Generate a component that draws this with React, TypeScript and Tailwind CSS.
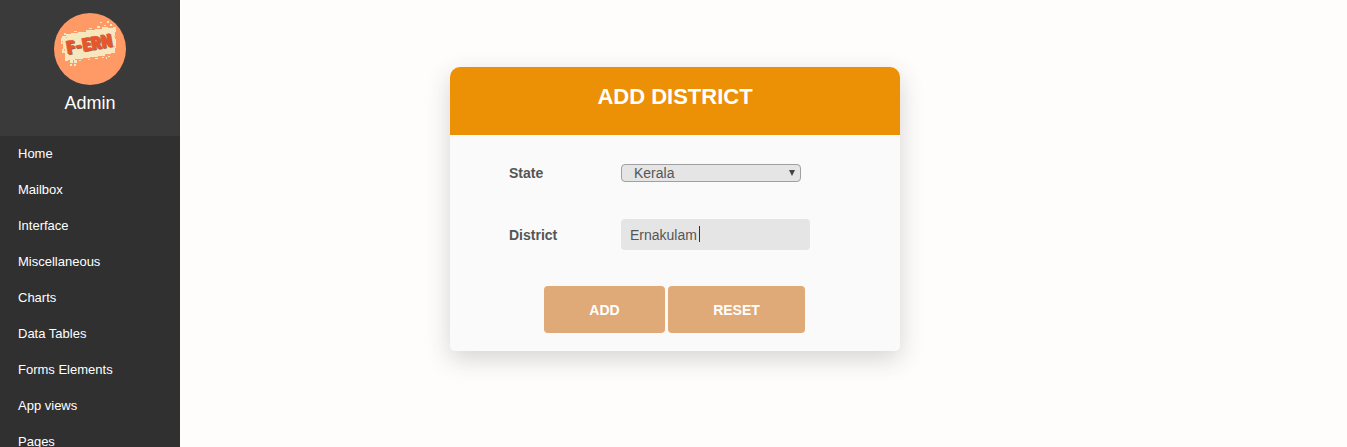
import { useState } from 'react';

const menu = [
  'Home',
  'Mailbox',
  'Interface',
  'Miscellaneous',
  'Charts',
  'Data Tables',
  'Forms Elements',
  'App views',
  'Pages',
];

function Logo() {
  return (
    <svg viewBox="0 0 72 72" className="size-[72px]" role="img" aria-label="F-ERN">
      <circle cx="36" cy="36" r="36" fill="#ff9966" />
      <path
        d="M8 23h4v-2h5v-1h7v-1h8v-2h9v-1h7v-2h6v1h5v-1h3v5h-1v7h1v9h-1v5h-4v1h-6v2h-7v1h-8v1h-7v1h-8v1H14v1h-3v-8H8v-4h1v-5H7v-6h1z"
        fill="#f6e7bf"
      />
      <g fill="#f6e7bf">
        <path d="M16 47h3v3h-3zM20 47h3v3h-3zM16 51h2v2h-2zM20 51h2v2h-2zM25 47h2v1h-2zM34 46h2v1h-2zM41 45h3v1h-3zM48 44h2v1h-2zM54 43h2v1h-2zM52 44h1v2h-1z" />
        <path d="M46 9h2v1h-2zM53 8h2v2h-2zM56 11h2v2h-2zM50 12h2v1h-2zM43 13h3v2h-3zM35 15h3v1h-3zM20 18h3v1h-3zM10 20h2v2h-2z" />
      </g>
      <path d="M8 28h1v2H8zM10 36h1v2h-1zM12 24h1v1h-1zM60 23h2v1h-2zM59 33h2v1h-2z" fill="#ffb283" />
      <g
        fontFamily="'Roboto Condensed', Roboto, 'Open Sans', sans-serif"
        fontSize="18"
        fontWeight="900"
        transform="rotate(-10 36 32)"
      >
        <text x="13" y="38" fill="#a85a40" stroke="#a85a40" strokeWidth="0.5">
          F-ERN
        </text>
        <text x="12" y="37" fill="#e8562c" stroke="#e8562c" strokeWidth="0.5">
          F-ERN
        </text>
      </g>
    </svg>
  );
}

export default function App() {
  const [district, setDistrict] = useState('Ernakulam');

  return (
    <div className="flex h-screen overflow-hidden bg-[#fffdfb] font-['Liberation_Sans',Arial,sans-serif]">
      <aside className="w-[180px] shrink-0 overflow-hidden bg-[#303030] text-white">
        <div className="flex flex-col items-center bg-[#3a3a3a] pt-[13px] pb-[19px]">
          <Logo />
          <p className="pt-[5px] text-lg leading-[27px]">Admin</p>
        </div>
        <nav>
          {menu.map((item) => (
            <a key={item} href="#" className="block px-[18px] text-[13px] leading-9">
              {item}
            </a>
          ))}
        </nav>
      </aside>

      <main className="min-w-0 flex-1 pt-[67px] pl-[270px]">
        <section className="w-full max-w-[450px] rounded-t-[10px] rounded-b-[5px] bg-[#fafafa] shadow-[0_8px_24px_rgba(50,45,55,0.2)]">
          <h1 className="rounded-t-[10px] bg-[#ec9006] pt-4 pb-6 text-center text-[22px] leading-7 font-bold text-white">
            ADD DISTRICT
          </h1>
          <form
            className="pb-[18px] text-sm text-[#555]"
            onSubmit={(e) => e.preventDefault()}
            onReset={() => setDistrict('')}
          >
            <div className="grid grid-cols-[112px_1fr] items-center gap-y-[23px] px-[59px] pt-[22px]">
              <label htmlFor="state" className="font-bold">
                State
              </label>
              <div className="flex h-8 items-center">
                <div className="relative flex w-[180px]">
                  <select
                    id="state"
                    defaultValue="Kerala"
                    className="h-[18px] w-full appearance-none rounded border border-[#a0a0a0] bg-[#e5e5e5] pl-3 text-sm leading-4"
                  >
                    <option>Kerala</option>
                  </select>
                  <svg
                    viewBox="0 0 6 6"
                    className="pointer-events-none absolute top-1.5 right-[6px] size-1.5"
                    fill="#444"
                    aria-hidden="true"
                  >
                    <path d="M0 0h6L3 6z" />
                  </svg>
                </div>
              </div>
              <label htmlFor="district" className="font-bold">
                District
              </label>
              <div className="flex h-[45px] items-center">
                <div className="relative flex w-[189px]">
                  <input
                    id="district"
                    type="text"
                    value={district}
                    onChange={(e) => setDistrict(e.target.value)}
                    className="h-[31px] w-full rounded bg-[#e5e5e5] px-[9px] text-sm outline-none"
                  />
                  <span className="pointer-events-none absolute top-[7px] left-[78px] h-4 w-px bg-[#333]" />
                </div>
              </div>
            </div>
            <div className="flex justify-center gap-[3px] pt-[29px] pr-px">
              <button
                type="submit"
                className="h-[47px] w-[121px] rounded bg-[#e0a978] font-bold text-white"
              >
                ADD
              </button>
              <button
                type="reset"
                className="h-[47px] w-[137px] rounded bg-[#e0a978] font-bold text-white"
              >
                RESET
              </button>
            </div>
          </form>
        </section>
      </main>
    </div>
  );
}
